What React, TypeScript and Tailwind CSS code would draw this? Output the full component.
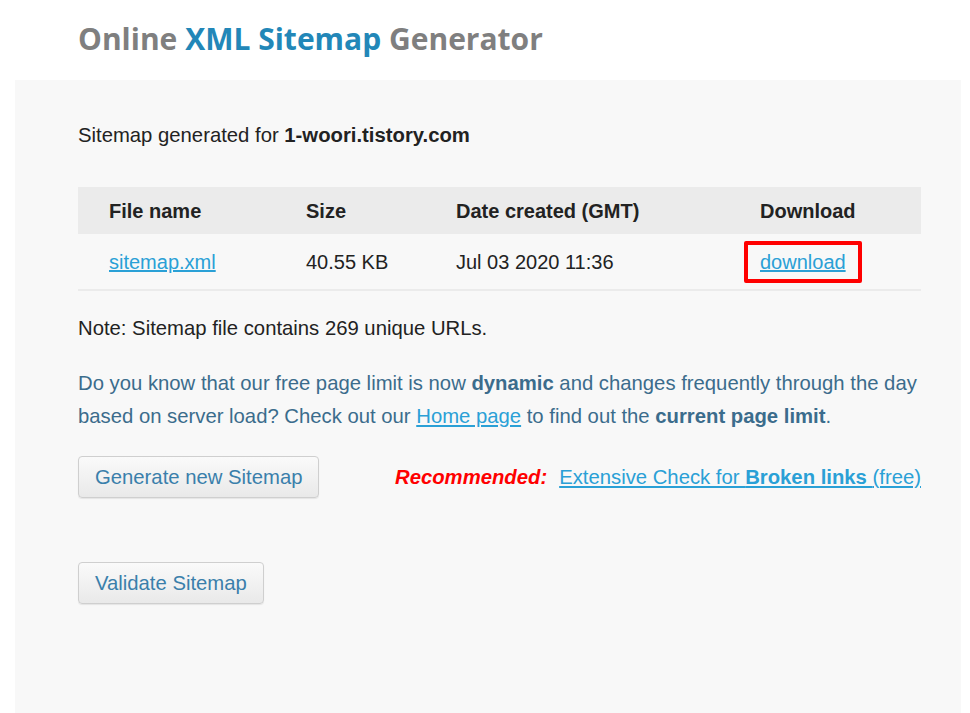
export default function App() {
  return (
    <div className="w-[970px] h-[713px] bg-white flex flex-col font-['Liberation_Sans',Arial,sans-serif] overflow-hidden">
      <div className="h-[80px] flex items-center pl-[78px] pb-[3px] shrink-0">
        <h1 className="font-['Open_Sans',sans-serif] font-bold text-[30px] leading-none text-[#7f7f7f]">
          Online <span className="text-[#2287b8]">XML Sitemap</span> Generator
        </h1>
      </div>

      <div className="ml-[15px] w-[946px] flex-1 bg-[#f8f8f8] pl-[63px] pr-[40px] pt-[41px]">
        <p className="text-[20.3px] leading-[28px] text-[#222]">
          Sitemap generated for <b>1-woori.tistory.com</b>
        </p>

        <table className="mt-[38px] w-[843px] table-fixed border-collapse text-[20px] text-[#222]">
          <colgroup>
            <col className="w-[198px]" />
            <col className="w-[150px]" />
            <col className="w-[304px]" />
            <col className="w-[191px]" />
          </colgroup>
          <thead>
            <tr className="bg-[#ebebeb] h-[47px]">
              <th className="text-left font-bold pl-[31px]">File name</th>
              <th className="text-left font-bold pl-[30px]">Size</th>
              <th className="text-left font-bold pl-[30px]">Date created (GMT)</th>
              <th className="text-left font-bold pl-[30px]">Download</th>
            </tr>
          </thead>
          <tbody>
            <tr className="h-[56px] border-b-2 border-[#ebebeb]">
              <td className="pl-[31px]">
                <a href="#" className="text-[#2aa0d6] underline">sitemap.xml</a>
              </td>
              <td className="pl-[30px]">40.55 KB</td>
              <td className="pl-[30px]">Jul 03 2020 11:36</td>
              <td className="pl-[14px]">
                <span className="inline-flex items-center h-[42px] px-[12px] border-4 border-[#ff0000] rounded-[2px]">
                  <a href="#" className="text-[#2aa0d6] underline">download</a>
                </span>
              </td>
            </tr>
          </tbody>
        </table>

        <p className="mt-[23px] text-[20.3px] leading-[28px] text-[#222]">
          Note: Sitemap file contains 269 unique URLs.
        </p>

        <p className="mt-[25px] text-[20.3px] leading-[33px] text-[#3b6c8c]">
          Do you know that our free page limit is now <b>dynamic</b> and changes frequently through the day
          based on server load? Check out our{' '}
          <a href="#" className="text-[#2aa0d6] underline">Home page</a> to find out the{' '}
          <b>current page limit</b>.
        </p>

        <div className="mt-[23px] flex items-center justify-between">
          <button className="h-[42px] px-[16px] rounded-[4px] border border-[#cfcfcf] bg-gradient-to-b from-[#fafafa] to-[#e9e9e9] text-[20.3px] text-[#3a7fab] shadow-[0_1px_1px_rgba(0,0,0,0.08)]">
            Generate new Sitemap
          </button>
          <div className="text-[20.3px]">
            <span className="font-bold italic text-[#ff0000]">Recommended:</span>
            <a href="#" className="ml-[12px] text-[#2aa0d6] underline">
              Extensive Check for <b>Broken links </b>(free)
            </a>
          </div>
        </div>

        <button className="mt-[64px] h-[42px] px-[16px] rounded-[4px] border border-[#cfcfcf] bg-gradient-to-b from-[#fafafa] to-[#e9e9e9] text-[20.3px] text-[#3a7fab] shadow-[0_1px_1px_rgba(0,0,0,0.08)]">
          Validate Sitemap
        </button>
      </div>
    </div>
  );
}
